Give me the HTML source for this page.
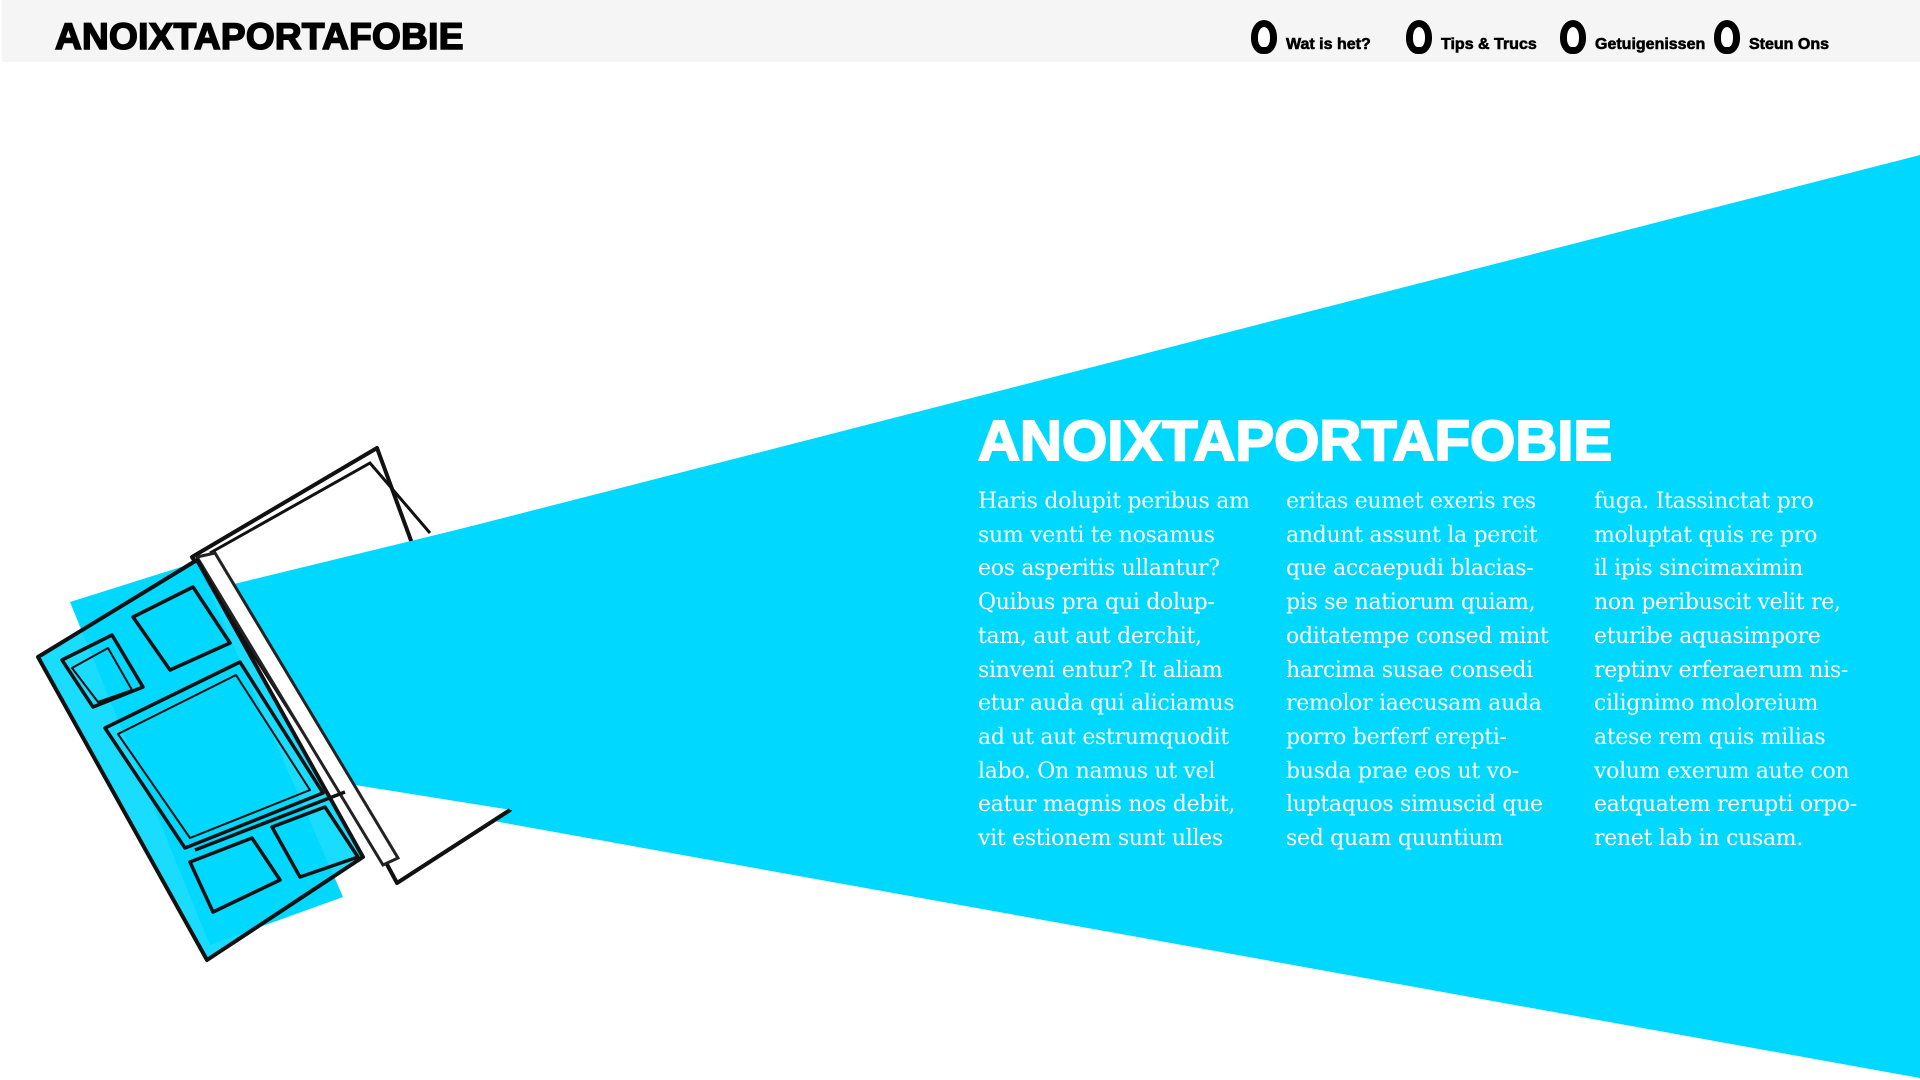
<!DOCTYPE html>
<html><head><meta charset="utf-8"><style>
html,body{margin:0;padding:0;background:#fff;width:1920px;height:1080px;overflow:hidden;position:relative;font-family:"Liberation Sans",sans-serif}
.hdr{position:absolute;left:2px;top:0;width:1918px;height:62px;background:#f5f5f5}
.logo{position:absolute;left:55px;top:17px;font-weight:bold;font-size:37px;line-height:40px;letter-spacing:0.3px;transform:scaleX(1.0);transform-origin:left top;white-space:nowrap;color:#000;-webkit-text-stroke:1.6px #000}
.ic{position:absolute;top:20px;width:12px;height:20px;border:7px solid #000;border-radius:50% 50% 45% 45%;background:#fff}
.nt{position:absolute;top:36px;font-weight:bold;font-size:16px;line-height:18px;white-space:nowrap;color:#000;letter-spacing:0px;-webkit-text-stroke:0.6px #000}
h1{position:absolute;left:978px;top:413px;margin:0;font-weight:bold;font-size:57px;line-height:57px;color:#fff;letter-spacing:0px;transform:scaleX(1.02);transform-origin:left top;white-space:nowrap;-webkit-text-stroke:2px #fff}
.col{position:absolute;top:485px;font-family:"DejaVu Serif","Liberation Serif",serif;font-size:22px;line-height:33.7px;color:#fff;white-space:nowrap;letter-spacing:-0.3px}
</style></head><body>
<svg width="1920" height="1080" style="position:absolute;left:0;top:0">
<polygon points="230,588 1920,155 1920,1078 355,796" fill="#00d8ff"/>
<polygon points="192,557 377,448 510,810 397,883 383,857" fill="#fff" stroke="#111" stroke-width="4" stroke-linejoin="round"/>
<polygon points="230,585 530,512 530,813 355,785" fill="#00d8ff"/>
<polyline points="210,553 370,463 430,533" fill="none" stroke="#111" stroke-width="3"/>
<polyline points="397,883 510,810" fill="none" stroke="#111" stroke-width="4"/>
<polygon points="197,557 215,553 398,858 383,865" fill="#fff" stroke="#222" stroke-width="3"/>
<polygon points="70,602 197,562 343,897 210,945" fill="#00d8ff"/>
<polygon points="38,657 197,560 363,857 207,960" fill="#00d8ff" fill-opacity="0.9" stroke="#111" stroke-width="4" stroke-linejoin="round"/>
<g fill="none" stroke="#111" stroke-width="3.5" stroke-linejoin="round">
<polygon points="62,660 112,635 143,687 93,707"/>
<polygon points="72,668 108,648 132,690 98,702" stroke-width="2"/>
<polygon points="133,617 193,587 230,643 170,670"/>
<polygon points="105,728 240,662 323,793 185,848"/>
<polygon points="118,734 236,675 310,790 190,838" stroke-width="2"/>
<polygon points="190,862 252,838 280,880 213,912"/>
<polygon points="272,827 325,807 358,857 300,877"/>
<line x1="195" y1="850" x2="345" y2="792"/>
</g>
</svg>
<div class="hdr"></div>
<div class="logo">ANOIXTAPORTAFOBIE</div>
<div class="ic" style="left:1251px"></div><div class="nt" style="left:1286px">Wat is het?</div>
<div class="ic" style="left:1406px"></div><div class="nt" style="left:1441px">Tips &amp; Trucs</div>
<div class="ic" style="left:1560px"></div><div class="nt" style="left:1595px">Getuigenissen</div>
<div class="ic" style="left:1714px"></div><div class="nt" style="left:1749px">Steun Ons</div>
<h1>ANOIXTAPORTAFOBIE</h1>
<div class="col" style="left:978px">Haris dolupit peribus am<br>sum venti te nosamus<br>eos asperitis ullantur?<br>Quibus pra qui dolup-<br>tam, aut aut derchit,<br>sinveni entur? It aliam<br>etur auda qui aliciamus<br>ad ut aut estrumquodit<br>labo. On namus ut vel<br>eatur magnis nos debit,<br>vit estionem sunt ulles</div>
<div class="col" style="left:1286px">eritas eumet exeris res<br>andunt assunt la percit<br>que accaepudi blacias-<br>pis se natiorum quiam,<br>oditatempe consed mint<br>harcima susae consedi<br>remolor iaecusam auda<br>porro berferf erepti-<br>busda prae eos ut vo-<br>luptaquos simuscid que<br>sed quam quuntium</div>
<div class="col" style="left:1594px">fuga. Itassinctat pro<br>moluptat quis re pro<br>il ipis sincimaximin<br>non peribuscit velit re,<br>eturibe aquasimpore<br>reptinv erferaerum nis-<br>cilignimo moloreium<br>atese rem quis milias<br>volum exerum aute con<br>eatquatem rerupti orpo-<br>renet lab in cusam.</div>
</body></html>
